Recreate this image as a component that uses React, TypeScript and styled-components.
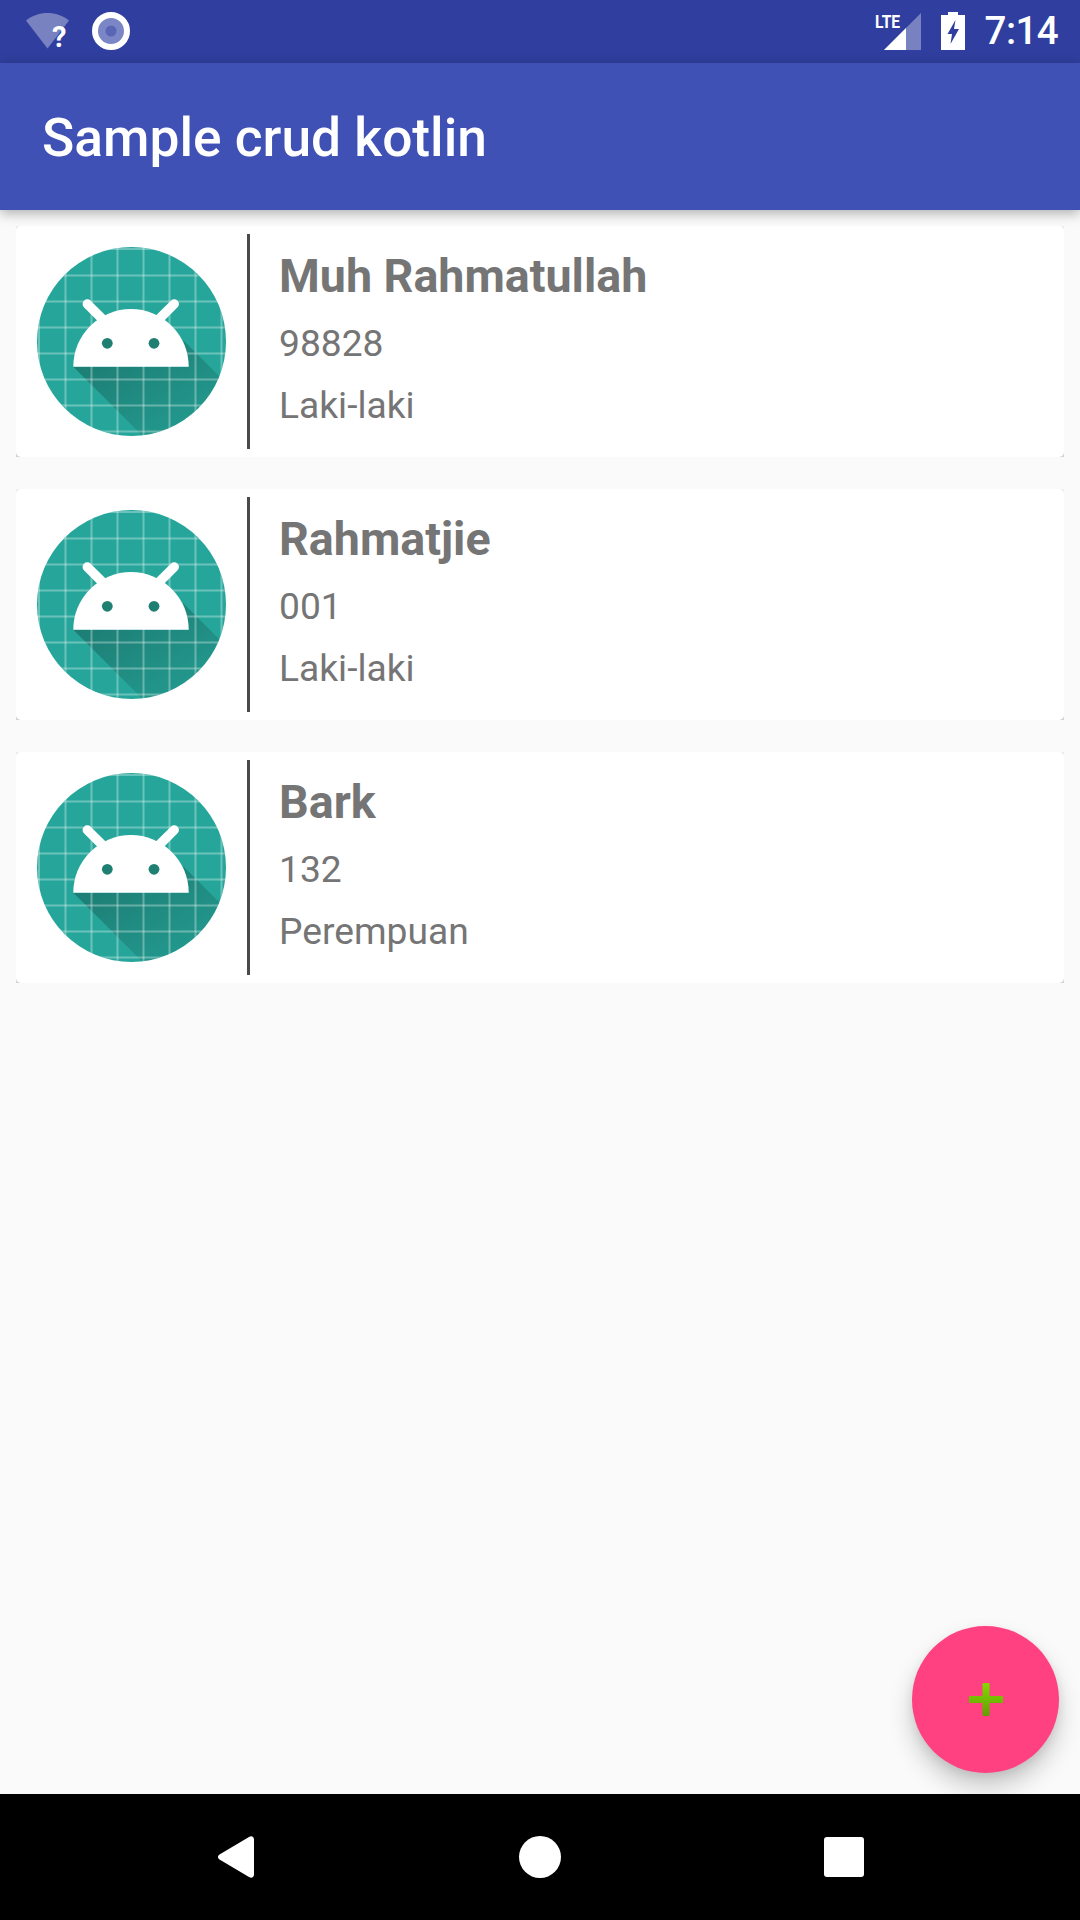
import React, { useId } from "react";
import styled, { createGlobalStyle } from "styled-components";

const Global = createGlobalStyle`
  html, body { margin: 0; padding: 0; background: #fafafa; }
  * { box-sizing: border-box; }
`;

const Screen = styled.div`
  position: relative;
  width: 1080px;
  height: 1920px;
  display: flex;
  flex-direction: column;
  background: #fafafa;
  font-family: Roboto, "Liberation Sans", sans-serif;
  overflow: hidden;
`;

const StatusBar = styled.div`
  height: 63px;
  flex: none;
  background: #303f9f;
  color: #fff;
  display: flex;
  align-items: center;
  justify-content: space-between;
  padding: 0 22px 1px 26px;
`;

const StatusGroup = styled.div<{ $gap: number }>`
  display: flex;
  align-items: center;
  gap: ${(p) => p.$gap}px;
`;

const WifiWrap = styled.div`
  position: relative;
  width: 43px;
  height: 36px;
`;

const Question = styled.span`
  position: absolute;
  left: 26px;
  top: 7px;
  font-size: 29px;
  line-height: 34px;
  font-weight: 700;
  color: #fff;
`;

const SignalWrap = styled.div`
  position: relative;
  width: 46px;
  height: 37px;
`;

const Lte = styled.span`
  position: absolute;
  left: 0;
  top: 1px;
  font-size: 19px;
  line-height: 16px;
  font-weight: 700;
  color: #fff;
  transform: scaleX(0.82);
  transform-origin: left top;
`;

const Clock = styled.span`
  font-size: 38.5px;
  line-height: 46px;
  font-weight: 500;
  letter-spacing: -0.6px;
  color: #fff;
`;

const Toolbar = styled.header`
  position: relative;
  z-index: 2;
  flex: none;
  height: 147px;
  background: #3f51b5;
  box-shadow: 0 3px 12px rgba(0, 0, 0, 0.32);
  display: flex;
  align-items: center;
  padding: 3px 0 0 42px;
`;

const Title = styled.h1`
  margin: 0;
  font-size: 53.3px;
  line-height: 60px;
  font-weight: 500;
  color: #fff;
`;

const List = styled.main`
  flex: 1;
  display: flex;
  flex-direction: column;
  gap: 32px;
  padding: 16px 16px 0;
`;

const Card = styled.article`
  height: 231px;
  background: linear-gradient(#ececec, #d2d2d2);
`;

const CardBody = styled.div`
  height: 100%;
  background: #fff;
  border-radius: 5px;
  display: flex;
  align-items: stretch;
`;

const AvatarCell = styled.div`
  width: 231px;
  flex: none;
  display: flex;
  align-items: center;
  padding-left: 21px;
`;

const Divider = styled.div`
  width: 3px;
  flex: none;
  margin: 8px 0;
  background: #4a4a4a;
`;

const Info = styled.div`
  display: flex;
  flex-direction: column;
  padding: 24px 0 0 29px;
  color: #757575;
`;

const Name = styled.div`
  font-size: 46.6px;
  line-height: 52px;
  font-weight: 700;
`;

const Detail = styled.div`
  font-size: 37.2px;
  line-height: 42px;
  margin-top: 20px;
`;

const Fab = styled.button`
  position: absolute;
  left: 912px;
  top: 1626px;
  width: 147px;
  height: 147px;
  border: 0;
  padding: 0;
  border-radius: 50%;
  background: #ff4081;
  box-shadow: 0 14px 24px rgba(0, 0, 0, 0.2), 0 4px 10px rgba(0, 0, 0, 0.08);
  display: flex;
  align-items: center;
  justify-content: center;
`;

const NavBar = styled.nav`
  flex: none;
  height: 126px;
  background: #000;
  position: relative;
  display: grid;
  grid-template-columns: 460px 180px 1fr;
  align-items: center;
`;

const NavCell = styled.div<{ $pad: number }>`
  display: flex;
  justify-content: flex-start;
  padding-left: ${(p) => p.$pad}px;
`;

const GRID = [2, 28.5, 54.5, 80.5, 106.5, 132.5, 158.5, 184.5];

const Avatar = () => {
  const id = useId();
  return (
    <svg width="189" height="189" viewBox="0 0 189 189">
      <defs>
        <clipPath id={`${id}c`}>
          <circle cx="94.5" cy="94.5" r="94.5" />
        </clipPath>
        <linearGradient id={`${id}s`} x1="0.1" y1="0.1" x2="0.85" y2="0.95">
          <stop offset="0" stopColor="#000" stopOpacity="0.26" />
          <stop offset="1" stopColor="#000" stopOpacity="0.05" />
        </linearGradient>
      </defs>
      <g clipPath={`url(#${id}c)`}>
        <rect width="189" height="189" fill="#26a69a" />
        <polygon
          points="36.3,119.7 110,193.4 200,193.4 200,147 146,93 151.7,119.7"
          fill={`url(#${id}s)`}
        />
        {GRID.map((p) => (
          <React.Fragment key={p}>
            <rect x={p - 1} y="0" width="2" height="189" fill="#fff" opacity="0.32" />
            <rect x="0" y={p - 1} width="189" height="2" fill="#fff" opacity="0.32" />
          </React.Fragment>
        ))}
      </g>
      <path d="M36.3 119.7a57.7 57.7 0 0 1 115.4 0z" fill="#fff" />
      <path
        d="M50.3 57 66 72.7M137.2 57 121.5 72.7"
        stroke="#fff"
        strokeWidth="9.5"
        strokeLinecap="round"
      />
      <circle cx="70.3" cy="96.3" r="5.4" fill="#1f7f73" />
      <circle cx="117" cy="96.3" r="5.4" fill="#1f7f73" />
    </svg>
  );
};

const PEOPLE = [
  { name: "Muh Rahmatullah", nim: "98828", gender: "Laki-laki" },
  { name: "Rahmatjie", nim: "001", gender: "Laki-laki" },
  { name: "Bark", nim: "132", gender: "Perempuan" },
];

export default function App() {
  return (
    <Screen>
      <Global />
      <StatusBar>
        <StatusGroup $gap={23}>
          <WifiWrap>
            <svg width="43" height="36" viewBox="0 0 43 36">
              <path d="M0 7.5C12 -2.5 31 -2.5 43 7.5L21.5 35.5Z" fill="#fff" opacity="0.35" />
            </svg>
            <Question>?</Question>
          </WifiWrap>
          <svg width="38" height="38" viewBox="0 0 38 38">
            <circle cx="19" cy="19" r="16" fill="#7b86c6" stroke="#fff" strokeWidth="6" />
            <circle cx="19" cy="19" r="5.5" fill="#303f9f" opacity="0.45" />
          </svg>
        </StatusGroup>
        <StatusGroup $gap={20}>
          <SignalWrap>
            <svg width="46" height="37" viewBox="0 0 46 37">
              <polygon points="9,37 46,0 46,37" fill="#fff" opacity="0.35" />
              <polygon points="9,37 31,15 31,37" fill="#fff" />
            </svg>
            <Lte>LTE</Lte>
          </SignalWrap>
          <svg width="24" height="38" viewBox="0 0 24 38">
            <path
              d="M7 0H17V3H24V38H0V3H7ZM14.5 8 6.5 22H11L9.5 32 18 17H13Z"
              fill="#fff"
              fillRule="evenodd"
            />
          </svg>
          <Clock>7:14</Clock>
        </StatusGroup>
      </StatusBar>

      <Toolbar>
        <Title>Sample crud kotlin</Title>
      </Toolbar>

      <List>
        {PEOPLE.map((p) => (
          <Card key={p.name}>
            <CardBody>
              <AvatarCell>
                <Avatar />
              </AvatarCell>
              <Divider />
              <Info>
                <Name>{p.name}</Name>
                <Detail>{p.nim}</Detail>
                <Detail>{p.gender}</Detail>
              </Info>
            </CardBody>
          </Card>
        ))}
      </List>

      <Fab aria-label="add">
        <svg width="34" height="33" viewBox="0 0 34 33">
          <defs>
            <linearGradient id="plus" x1="0" y1="0" x2="0" y2="1">
              <stop offset="0" stopColor="#86d900" />
              <stop offset="1" stopColor="#5f9f00" />
            </linearGradient>
          </defs>
          <path
            d="M13.5 1a1 1 0 0 1 1-1h5a1 1 0 0 1 1 1v12H33a1 1 0 0 1 1 1v5a1 1 0 0 1-1 1H20.5v12a1 1 0 0 1-1 1h-5a1 1 0 0 1-1-1V20H1a1 1 0 0 1-1-1v-5a1 1 0 0 1 1-1h12.5Z"
            fill="url(#plus)"
          />
        </svg>
      </Fab>

      <NavBar>
        <NavCell $pad={218}>
          <svg width="36" height="42" viewBox="0 0 36 42">
            <path
              d="M36 3.5V38.5C36 41.3 33.5 42.8 31 41L1.5 23.5C-.5 22.2-.5 19.8 1.5 18.5L31 1C33.5-.8 36 .7 36 3.5Z"
              fill="#fff"
            />
          </svg>
        </NavCell>
        <NavCell $pad={59}>
          <svg width="42" height="42" viewBox="0 0 42 42">
            <circle cx="21" cy="21" r="21" fill="#fff" />
          </svg>
        </NavCell>
        <NavCell $pad={184}>
          <svg width="40" height="40" viewBox="0 0 40 40">
            <rect width="40" height="40" rx="3" fill="#fff" />
          </svg>
        </NavCell>
      </NavBar>
    </Screen>
  );
}
